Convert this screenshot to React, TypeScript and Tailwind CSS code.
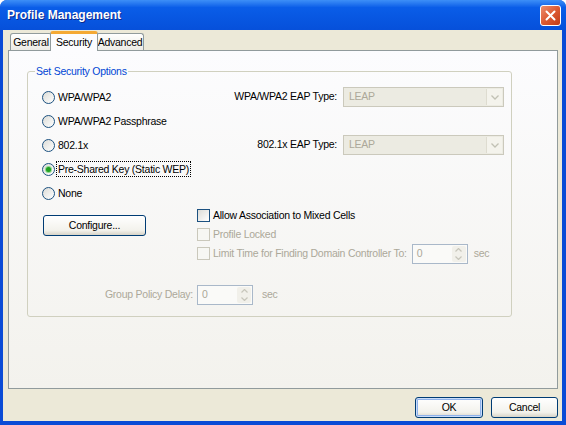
import React from "react";

const disabledText = "text-[#aca899]";

function Radio({ label, checked, focused }: { label: string; checked?: boolean; focused?: boolean }) {
  return (
    <label className="flex items-center">
      <span className="flex h-[13px] w-[13px] shrink-0 items-center justify-center rounded-full border border-[#1c5180] bg-gradient-to-br from-[#dcdcd7] to-white">
        {checked && (
          <span className="h-[5px] w-[5px] rounded-full bg-[#21a121] shadow-[0_0_0_1px_#8fd88f]" />
        )}
      </span>
      <span
        className={`ml-[1px] border px-[1px] leading-[14px] ${
          focused ? "border-dotted border-black" : "border-transparent"
        }`}
      >
        {label}
      </span>
    </label>
  );
}

function Checkbox({ label, disabled }: { label: string; disabled?: boolean }) {
  return (
    <label className="flex items-center whitespace-nowrap">
      <span
        className={`h-[13px] w-[13px] shrink-0 border ${
          disabled
            ? "border-[#cac8bb] bg-[#f7f7f3]"
            : "border-[#1c5180] bg-gradient-to-br from-[#dcdcd7] to-white"
        }`}
      />
      <span className={`ml-[3px] ${disabled ? disabledText : ""}`}>{label}</span>
    </label>
  );
}

function Chevron() {
  return (
    <svg width="8" height="5" viewBox="0 0 8 5">
      <path d="M0.5 0.5 L4 4 L7.5 0.5" fill="none" stroke="#c1c1b4" strokeWidth="1.3" />
    </svg>
  );
}

function DisabledSelect({ value }: { value: string }) {
  return (
    <div className="flex h-[20px] w-[161px] shrink-0 items-center border border-[#cbc9bc] bg-[#ecebe2]">
      <span className={`flex-1 pl-[5px] ${disabledText}`}>{value}</span>
      <span className="mr-[1px] flex h-[16px] w-[16px] items-center justify-center border-l border-[#dedcd0] bg-[#f4f3ec]">
        <Chevron />
      </span>
    </div>
  );
}

function SpinBox({ value }: { value: string }) {
  return (
    <div className="flex h-[20px] w-[56px] shrink-0 items-center border border-[#a9b8c9] bg-[#fafaf8]">
      <span className={`flex-1 pl-[4px] ${disabledText}`}>{value}</span>
      <span className="mr-[1px] flex h-[16px] w-[14px] flex-col rounded-[2px] bg-[#f1f0ea]">
        <span className="flex flex-1 items-center justify-center">
          <svg width="7" height="4" viewBox="0 0 7 4">
            <path d="M0.5 3.5 L3.5 0.5 L6.5 3.5" fill="none" stroke="#c7c6bb" strokeWidth="1.2" />
          </svg>
        </span>
        <span className="flex flex-1 items-center justify-center">
          <svg width="7" height="4" viewBox="0 0 7 4">
            <path d="M0.5 0.5 L3.5 3.5 L6.5 0.5" fill="none" stroke="#c7c6bb" strokeWidth="1.2" />
          </svg>
        </span>
      </span>
    </div>
  );
}

function XPButton({ label, width, isDefault }: { label: string; width: string; isDefault?: boolean }) {
  return (
    <button
      className={`${width} h-[21px] rounded-[3px] border border-[#003c74] bg-gradient-to-b from-white via-[#f3f2ec] via-75% to-[#d8d4c8] text-center ${
        isDefault ? "shadow-[inset_0_0_0_1px_#c9dcfa,inset_0_0_0_2px_#8fb2ea]" : ""
      }`}
    >
      {label}
    </button>
  );
}

function Tab({ label, selected, width }: { label: string; selected?: boolean; width: string }) {
  if (selected) {
    return (
      <div
        className={`relative z-10 -mx-[2px] -mb-[1px] flex h-[20px] ${width} items-start justify-center rounded-t-[3px] border-x border-t-[3px] border-x-[#919b9c] border-t-[#f4a934] bg-[#fcfcfe] pt-[1px]`}
      >
        {label}
      </div>
    );
  }
  return (
    <div
      className={`flex h-[17px] ${width} items-center justify-center rounded-t-[3px] border-x border-t border-[#919b9c] bg-gradient-to-b from-white to-[#ecebe5] pt-[1px]`}
    >
      {label}
    </div>
  );
}

export default function App() {
  return (
    <div className="flex h-[425px] w-[566px] flex-col overflow-hidden rounded-t-[7px] bg-[#0a4bd6] font-['Liberation_Sans',Arial,sans-serif] text-[10.5px] text-black">
      {/* title bar */}
      <div className="flex h-[30px] shrink-0 items-center bg-gradient-to-b from-[#3d8ff7] via-[#0a5de8] via-25% to-[#0650da] pl-[7px] pr-[5px]">
        <span className="flex-1 text-[12px] font-bold text-white [text-shadow:1px_1px_0_#0c2a8c]">
          Profile Management
        </span>
        <span className="flex h-[21px] w-[21px] items-center justify-center rounded-[3px] border border-white bg-gradient-to-br from-[#eb8c6c] via-[#dc5a32] to-[#c23b15]">
          <svg width="11" height="11" viewBox="0 0 11 11">
            <path d="M1.5 1.5 L9.5 9.5 M9.5 1.5 L1.5 9.5" stroke="white" strokeWidth="2" strokeLinecap="round" />
          </svg>
        </span>
      </div>

      {/* dialog body */}
      <div className="mb-[4px] ml-[3px] mr-[4px] flex flex-1 flex-col bg-[#ece9d8] pl-[5px] pr-[4px] tracking-[-0.25px]">
        <div className="flex h-[20px] items-end pl-[2px]">
          <Tab label="General" width="w-[42px]" />
          <Tab label="Security" width="w-[48px]" selected />
          <Tab label="Advanced" width="w-[48px]" />
        </div>

        <div className="h-[339px] border border-[#919b9c] bg-gradient-to-b from-[#fcfcfe] to-[#f3f2ed] pl-[18px] pt-[20px]">
          <div className="relative h-[246px] w-[485px] rounded-[3px] border border-[#d0d0bf] pl-[14px] pr-[7px] pt-[13px]">
            <span className="absolute -top-[8px] left-[7px] bg-[#fbfbfb] px-[1px] text-[#0046d5]">
              Set Security Options
            </span>

            <div className="flex h-[24px] items-center">
              <div className="flex-1">
                <Radio label="WPA/WPA2" />
              </div>
              <span className="mr-[6px]">WPA/WPA2 EAP Type:</span>
              <DisabledSelect value="LEAP" />
            </div>
            <div className="flex h-[24px] items-center">
              <Radio label="WPA/WPA2 Passphrase" />
            </div>
            <div className="flex h-[24px] items-center">
              <div className="flex-1">
                <Radio label="802.1x" />
              </div>
              <span className="mr-[6px]">802.1x EAP Type:</span>
              <DisabledSelect value="LEAP" />
            </div>
            <div className="flex h-[24px] items-center">
              <Radio label="Pre-Shared Key (Static WEP)" checked focused />
            </div>
            <div className="flex h-[24px] items-center">
              <Radio label="None" />
            </div>

            <div className="mt-[1px] flex">
              <div className="w-[155px] shrink-0 pl-[1px] pt-[9px]">
                <XPButton label="Configure..." width="w-[103px]" />
              </div>
              <div className="flex flex-col">
                <div className="flex h-[19px] items-center">
                  <Checkbox label="Allow Association to Mixed Cells" />
                </div>
                <div className="flex h-[19px] items-center">
                  <Checkbox label="Profile Locked" disabled />
                </div>
                <div className="flex h-[19px] items-center">
                  <Checkbox label="Limit Time for Finding Domain Controller To:" disabled />
                  <span className="ml-[5px]">
                    <SpinBox value="0" />
                  </span>
                  <span className={`ml-[6px] ${disabledText}`}>sec</span>
                </div>
              </div>
            </div>

            <div className="mt-[22px] flex h-[20px] items-center">
              <span className={`w-[151px] text-right ${disabledText}`}>Group Policy Delay:</span>
              <span className="ml-[4px]">
                <SpinBox value="0" />
              </span>
              <span className={`ml-[9px] ${disabledText}`}>sec</span>
            </div>
          </div>
        </div>

        <div className="mt-[8px] flex justify-end gap-[8px]">
          <XPButton label="OK" width="w-[68px]" isDefault />
          <XPButton label="Cancel" width="w-[67px]" />
        </div>
      </div>
    </div>
  );
}
